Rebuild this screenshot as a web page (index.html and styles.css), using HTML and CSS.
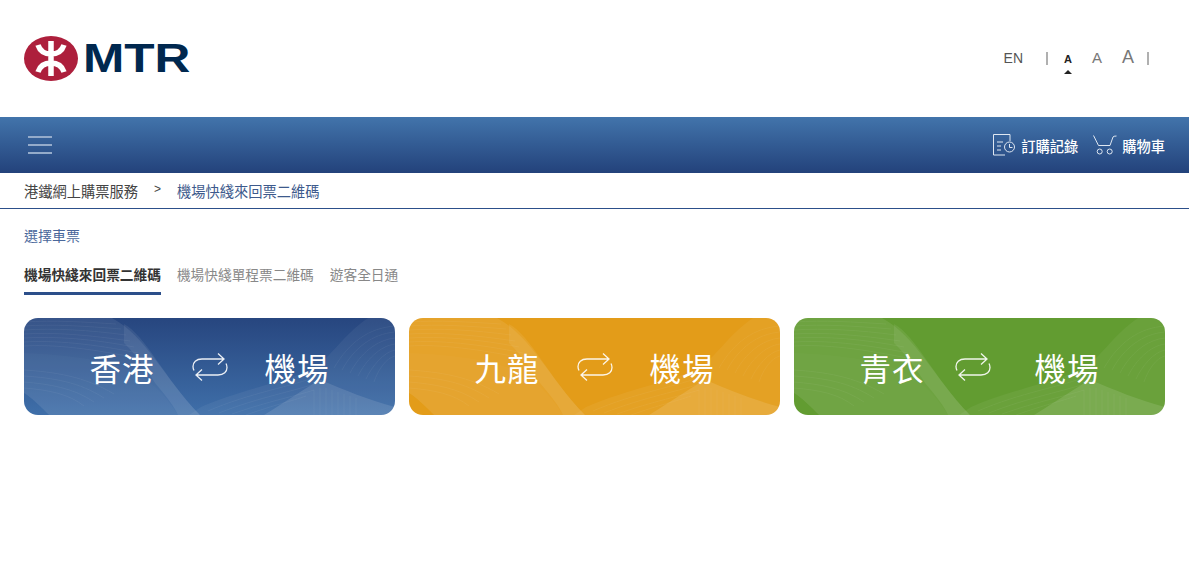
FILE: index.html
```html
<!DOCTYPE html>
<html lang="zh-Hant">
<head>
  <meta charset="UTF-8" />
  <title>港鐵網上購票服務</title>
  <link rel="stylesheet" href="styles.css">
</head>
<body>

  <svg class="defs" width="0" height="0">
    <defs>
      <symbol id="swap" viewBox="0 0 36 28">
        <path d="M26 .5l6 5.500-6 5.500M32 6H10C4 6 1 9.500 1 13.500c0 2 .5 3 1 4M10 16.500L4 22l6 5.500M4 22H26C32 22 35 18.500 35 14.500c0-2-.5-3-1-4" fill="none" stroke="#fff" stroke-opacity=".9" stroke-width="1.300"/>
      </symbol>
      <symbol id="waves" viewBox="0 0 371 97" preserveAspectRatio="none">
        <path d="M0 75V0H88C122 18 140 60 176 97H25C18 90 8 80 0 75Z" fill="#fff" fill-opacity=".08"/>
        <path d="M0 75V35C30 36 74 40 100 50C125 60 140 75 154 97H25C18 90 8 80 0 75Z" fill="#fff" fill-opacity=".02"/>
        <path d="M100 25C115 40 125 55 131 65C142 78 150 88 154 97H176C140 60 122 18 100 6Z" fill="#fff" fill-opacity=".07"/>
        <path d="M177 89C215 72 270 62 291 49C310 36 318 18 344 0H371V97H165Z" fill="#fff" fill-opacity=".05"/>
        <path d="M297 62C320 72 345 82 371 89V97H240C265 82 280 70 297 62Z" fill="#fff" fill-opacity=".11"/>
        <g fill="none" stroke="#fff" stroke-opacity=".09" stroke-width=".6">
          <path d="M0 4C30 2 60 4 92 6M0 8C30 6 60 8 97 11M0 12C30 10 65 12 102 17M0 16C30 14 65 17 106 23M0 20C30 18 70 21 110 29M0 24C30 22 70 26 114 35M0 28C30 26 70 31 118 41"/>
          <path d="M0 52C30 54 60 58 90 76M0 58C30 60 55 64 80 80M0 64C25 66 50 70 70 84M0 70C25 72 45 76 60 88"/>
          <path d="M371 8C345 10 325 24 310 50M371 14C348 16 330 30 318 52M371 20C352 22 336 36 326 55M371 26C356 28 342 42 334 58M371 32C360 34 348 48 342 61M371 38C362 40 354 52 350 64"/>
          <path d="M184 93C225 75 270 68 294 58M195 95C235 79 272 73 296 64M208 96C245 83 272 78 290 72M222 97C250 87 268 83 282 78"/>
          <path d="M290 97V72M296 97V70M302 97V70M308 97V72M314 97V74M320 97V76M326 97V78M332 97V80"/>
        </g>
      </symbol>
    </defs>
  </svg>

  <header class="top">
    <a class="logo" href="#">
      <svg width="54" height="45" viewBox="0 0 54 45">
        <ellipse cx="27" cy="22.500" rx="27" ry="22.500" fill="#ad1f3c"/>
        <path d="M27 5v35M14 9c2 6 7 9 13 9s11-3 13-9M14 36c2-6 7-9 13-9s11 3 13 9" fill="none" stroke="#fff" stroke-width="5.500"/>
      </svg>
      <span class="logo-text">MTR</span>
    </a>
    <div class="tools">
      <a class="lang" href="#">EN</a>
      <span class="sep"></span>
      <span class="size size-s">A</span>
      <span class="size size-m">A</span>
      <span class="size size-l">A</span>
      <span class="sep sep-end"></span>
    </div>
  </header>

  <nav class="bar">
    <button class="burger" aria-label="menu"><i></i><i></i><i></i></button>
    <div class="bar-links">
      <a href="#">
        <svg width="23" height="22" viewBox="0 0 23 22" fill="none" stroke="#dfe7f1" stroke-width="1">
          <path d="M17 .5H.5V21H12M17 .5V7"/>
          <path d="M4 8h6M4 12h4M4 16h4"/>
          <circle cx="16.500" cy="13" r="5"/>
          <path d="M16.500 10v3.500h3"/>
        </svg>
        訂購記錄
      </a>
      <a href="#">
        <svg width="24" height="22" viewBox="0 0 24 22" fill="none" stroke="#dfe7f1" stroke-width="1">
          <path d="M.5 1.500L5.500 11.500H17L20 3Q20.500 2 23.500 2"/>
          <circle cx="6.700" cy="17.500" r="2.500"/>
          <circle cx="16.700" cy="17.500" r="2.500"/>
        </svg>
        購物車
      </a>
    </div>
  </nav>

  <div class="crumbs">
    <a href="#">港鐵網上購票服務</a>
    <span class="crumb-arrow">&gt;</span>
    <a class="current" href="#">機場快綫來回票二維碼</a>
  </div>

  <main class="content">
    <h2 class="section-title">選擇車票</h2>

    <div class="tabs">
      <a class="tab active" href="#">機場快綫來回票二維碼</a>
      <a class="tab" href="#">機場快綫單程票二維碼</a>
      <a class="tab" href="#">遊客全日通</a>
    </div>

    <div class="routes">
      <a class="route blue" href="#">
        <svg class="waves"><use href="#waves"/></svg>
        <span>香港</span>
        <svg class="swap"><use href="#swap"/></svg>
        <span>機場</span>
      </a>
      <a class="route orange" href="#">
        <svg class="waves"><use href="#waves"/></svg>
        <span>九龍</span>
        <svg class="swap"><use href="#swap"/></svg>
        <span>機場</span>
      </a>
      <a class="route green" href="#">
        <svg class="waves"><use href="#waves"/></svg>
        <span>青衣</span>
        <svg class="swap"><use href="#swap"/></svg>
        <span>機場</span>
      </a>
    </div>
  </main>

</body>
</html>
```

FILE: styles.css
```css
* {
  box-sizing: border-box;
  margin: 0;
  padding: 0;
}

body {
  font-family: "Liberation Sans", "Noto Sans CJK TC", sans-serif;
  background: #fff;
  color: #444;
}

a {
  color: inherit;
  text-decoration: none;
}

.defs {
  display: block;
  height: 0;
}

.top {
  height: 117px;
  padding: 0 40px 0 24px;
  display: flex;
  justify-content: space-between;
  align-items: center;
}

.logo {
  display: flex;
  align-items: center;
  gap: 5px;
}

.logo-text {
  font-size: 40px;
  font-weight: bold;
  line-height: 45px;
  color: #00284f;
  transform: scaleX(1.24);
  transform-origin: left;
}

.tools {
  display: flex;
  align-items: baseline;
  padding-bottom: 2px;
  color: #777;
}

.lang {
  font-size: 14px;
  color: #555;
  margin-right: 23px;
}

.sep {
  width: 2px;
  height: 13px;
  margin-right: 16px;
  background: #b0b0b0;
  transform: translateY(2px);
}

.sep-end {
  margin: 0 0 0 13px;
}

.size {
  position: relative;
  margin-right: 20px;
}

.size-s {
  font-size: 11px;
  font-weight: bold;
  color: #222;
}

.size-s::after {
  content: "";
  position: absolute;
  left: 0;
  bottom: -9px;
  border: 4px solid transparent;
  border-top: 0;
  border-bottom-color: #222;
}

.size-m {
  font-size: 15px;
}

.size-l {
  font-size: 18px;
  margin-right: 0;
}

.bar {
  height: 56px;
  padding: 0 24px 0 28px;
  background: linear-gradient(#4274ab, #23427b);
  display: flex;
  justify-content: space-between;
  align-items: center;
}

.burger {
  width: 24px;
  background: none;
  border: none;
  display: flex;
  flex-direction: column;
  gap: 6px;
}

.burger i {
  height: 2px;
  background: #94abca;
}

.bar-links {
  display: flex;
  gap: 15px;
  color: #fff;
  font-size: 14.25px;
  font-weight: 500;
}

.bar-links a {
  display: flex;
  align-items: center;
  gap: 5px;
}

.crumbs {
  height: 36px;
  padding: 0 24px 1px;
  border-bottom: 1px solid #2c4f8a;
  font-size: 14.25px;
  display: flex;
  align-items: center;
}

.crumb-arrow {
  font-size: 12px;
  margin: 0 16px;
  position: relative;
  top: -1px;
}

.current {
  color: #3d5a8c;
}

.content {
  padding: 0 24px;
}

.section-title {
  font-size: 14px;
  font-weight: normal;
  color: #4a679b;
  padding-top: 18px;
  line-height: 18px;
}

.tabs {
  display: flex;
  gap: 16px;
  margin-top: 20px;
}

.tab {
  font-size: 13.7px;
  line-height: 21px;
  color: #888;
  padding-bottom: 6px;
  border-bottom: 3px solid transparent;
}

.tab.active {
  color: #333;
  font-weight: bold;
  border-bottom-color: #2c4f8a;
}

.routes {
  display: grid;
  grid-template-columns: repeat(3, 1fr);
  gap: 14px;
  margin-top: 23px;
}

.route {
  position: relative;
  height: 97px;
  border-radius: 14px;
  overflow: hidden;
  display: flex;
  justify-content: center;
  align-items: center;
  gap: 37px;
  color: #fff;
  font-size: 31.5px;
  letter-spacing: 1px;
}

.route span,
.route .swap {
  position: relative;
}

.waves {
  position: absolute;
  inset: 0;
  width: 100%;
  height: 100%;
}

.swap {
  width: 36px;
  height: 28px;
}

.green .swap {
  margin: 0 7px 0 -7px;
}

.blue {
  background: linear-gradient(#27467f, #3f6fa9);
}

.orange {
  background: #e39c19;
}

.green {
  background: #629c31;
}
```
